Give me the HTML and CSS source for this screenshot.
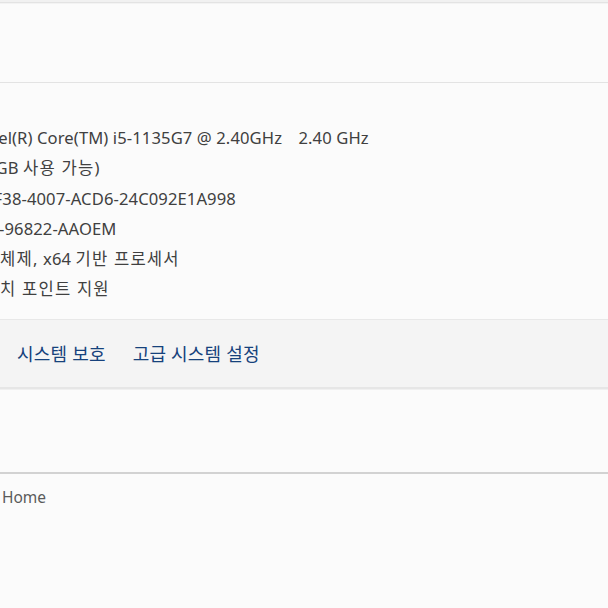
FILE: index.html
```html
<!DOCTYPE html>
<html lang="ko">
<head>
  <meta charset="UTF-8" />
  <title>시스템 정보</title>
  <link rel="stylesheet" href="styles.css">
</head>
<body>
  <div class="top-edge"></div>
  <div class="blank-card"></div>

  <div class="specs">
    <div class="spec-row cut-cpu">
      <span class="value">Intel(R) Core(TM) i5-1135G7 @ 2.40GHz</span>
      <span class="value extra">2.40 GHz</span>
    </div>
    <div class="spec-row cut-ram">6GB <span class="ko">사용 가능</span>)</div>
    <div class="spec-row cut-id">9F38-4007-ACD6-24C092E1A998</div>
    <div class="spec-row cut-pid">-96822-AAOEM</div>
    <div class="spec-row"><span class="ko">체제,</span> x64 <span class="ko">기반 프로세서</span></div>
    <div class="spec-row"><span class="ko">치 포인트 지원</span></div>
  </div>

  <div class="related">
    <a href="#">시스템 보호</a>
    <a href="#">고급 시스템 설정</a>
  </div>

  <div class="blank-card low"></div>

  <div class="edition">Home</div>
</body>
</html>
```

FILE: styles.css
```css
body {
  margin: 0;
  background: #fbfbfb;
  font-family: "Noto Sans", "Noto Sans CJK KR", sans-serif;
  color: #404040;
  overflow: hidden;
  height: 608px;
}
.top-edge {
  height: 2px;
  background: #f1f1f1;
  border-bottom: 1px solid #e3e3e3;
}
.blank-card {
  height: 78px;
  border-bottom: 1px solid #e3e3e3;
  border-top: 1px solid #f3f3f3;
}
.specs {
  padding: 40px 0 14px;
  font-size: 16.6px;
  line-height: 30.3px;
  letter-spacing: 0.1px;
}
.spec-row {
  white-space: nowrap;
}
.ko {
  letter-spacing: 1.2px;
}
.extra {
  margin-left: 12px;
}
.cut-cpu { margin-left: -24px; }
.cut-ram { margin-left: -14px; }
.cut-id { margin-left: -16px; }
.cut-pid { margin-left: -1px; }
.related {
  background: #f4f4f4;
  border-top: 1px solid #e8e8e8;
  border-bottom: 2px solid #e6e6e6;
  height: 67px;
  display: flex;
  align-items: center;
  gap: 27px;
  padding-left: 17px;
}
.related a {
  color: #16427c;
  text-decoration: none;
  font-size: 18px;
  letter-spacing: 0.2px;
}
.blank-card.low {
  height: 82px;
  border-top: 1px solid #f0f0f0;
  border-bottom: 2px solid #d2d2d2;
}
.edition {
  padding: 12px 0 0 2px;
  font-size: 15.5px;
  color: #5a5a5a;
}
```
